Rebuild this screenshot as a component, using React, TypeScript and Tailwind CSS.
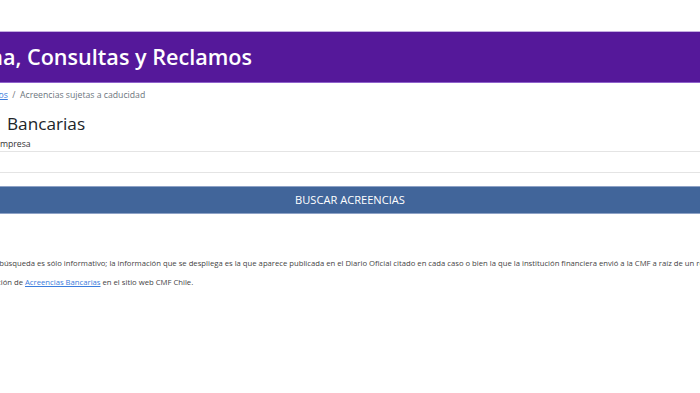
import React from 'react'

// Page appears scrolled sideways: every text row keeps its hidden start in a
// right-aligned span that sits to the left of the viewport edge.
function Row({ prefix, anchor, gap = 0, children, className = '' }: { prefix: React.ReactNode; anchor: number; gap?: number; children: React.ReactNode; className?: string }) {
  return (
    <div className={`flex items-center whitespace-pre ${className}`}>
      <span className="shrink-0 w-[600px] text-right" style={{ marginLeft: anchor - 600, paddingRight: gap }}>
        {prefix}
      </span>
      <span>{children}</span>
    </div>
  )
}

export default function App() {
  return (
    <div
      className="w-[700px] h-[393px] overflow-hidden bg-white"
      style={{ fontFamily: '"Open Sans", "Noto Sans", sans-serif' }}
    >
      <div className="h-[31px]" />

      {/* Header */}
      <div className="h-[52px] flex items-center bg-[#55189a] border-t border-t-[#c3aee0] border-b border-b-[#8f62cc]">
        <Row prefix="Atención Ciudadana, " anchor={27} className="text-white text-[21.6px] font-semibold">
          Consultas y Reclamos
        </Row>
      </div>

      {/* Breadcrumb */}
      <Row
        anchor={20}
        className="mt-[5px] h-[16px] text-[8.7px] text-[#6c757d]"
        prefix={
          <>
            <a className="text-[#3b7ddd] underline">Consultas y Reclamos</a>
            <span className="text-[#6c757d]">  /  </span>
          </>
        }
      >
        Acreencias sujetas a caducidad
      </Row>

      {/* Heading */}
      <Row prefix="Acreencias" anchor={7} gap={7} className="mt-[9px] h-[22px] text-[17.2px] text-[#212529]">
        Bancarias
      </Row>

      {/* Label */}
      <Row prefix="Nombre o RUT " anchor={-5} className="mt-[3px] h-[13px] text-[8.7px] text-[#333]">
        empresa
      </Row>

      {/* Input */}
      <div className="h-[22px] border-y border-[#e4e4e4] bg-white" />

      {/* Button */}
      <button className="mt-[13px] w-full h-[28px] bg-[#41659a] border-y border-[#8ea2c6] text-white text-[11.1px] tracking-normal">
        BUSCAR ACREENCIAS
      </button>

      {/* Disclaimer */}
      <div className="mt-[40px] text-[7.7px] text-[#444]">
        <Row prefix="El resultado de esta búsqueda " anchor={37} className="h-[19px]">
          es sólo informativo; la información que se despliega es la que aparece publicada en el Diario Oficial citado en cada caso o bien la que la institución financiera envió a la CMF a raíz de un requerimiento de información.
        </Row>
        <Row prefix="Para mayor información, visite la sección de " anchor={25} className="h-[19px]">
          <a className="text-[#3b7ddd] underline">Acreencias Bancarias</a> en el sitio web CMF Chile.
        </Row>
      </div>
    </div>
  )
}
